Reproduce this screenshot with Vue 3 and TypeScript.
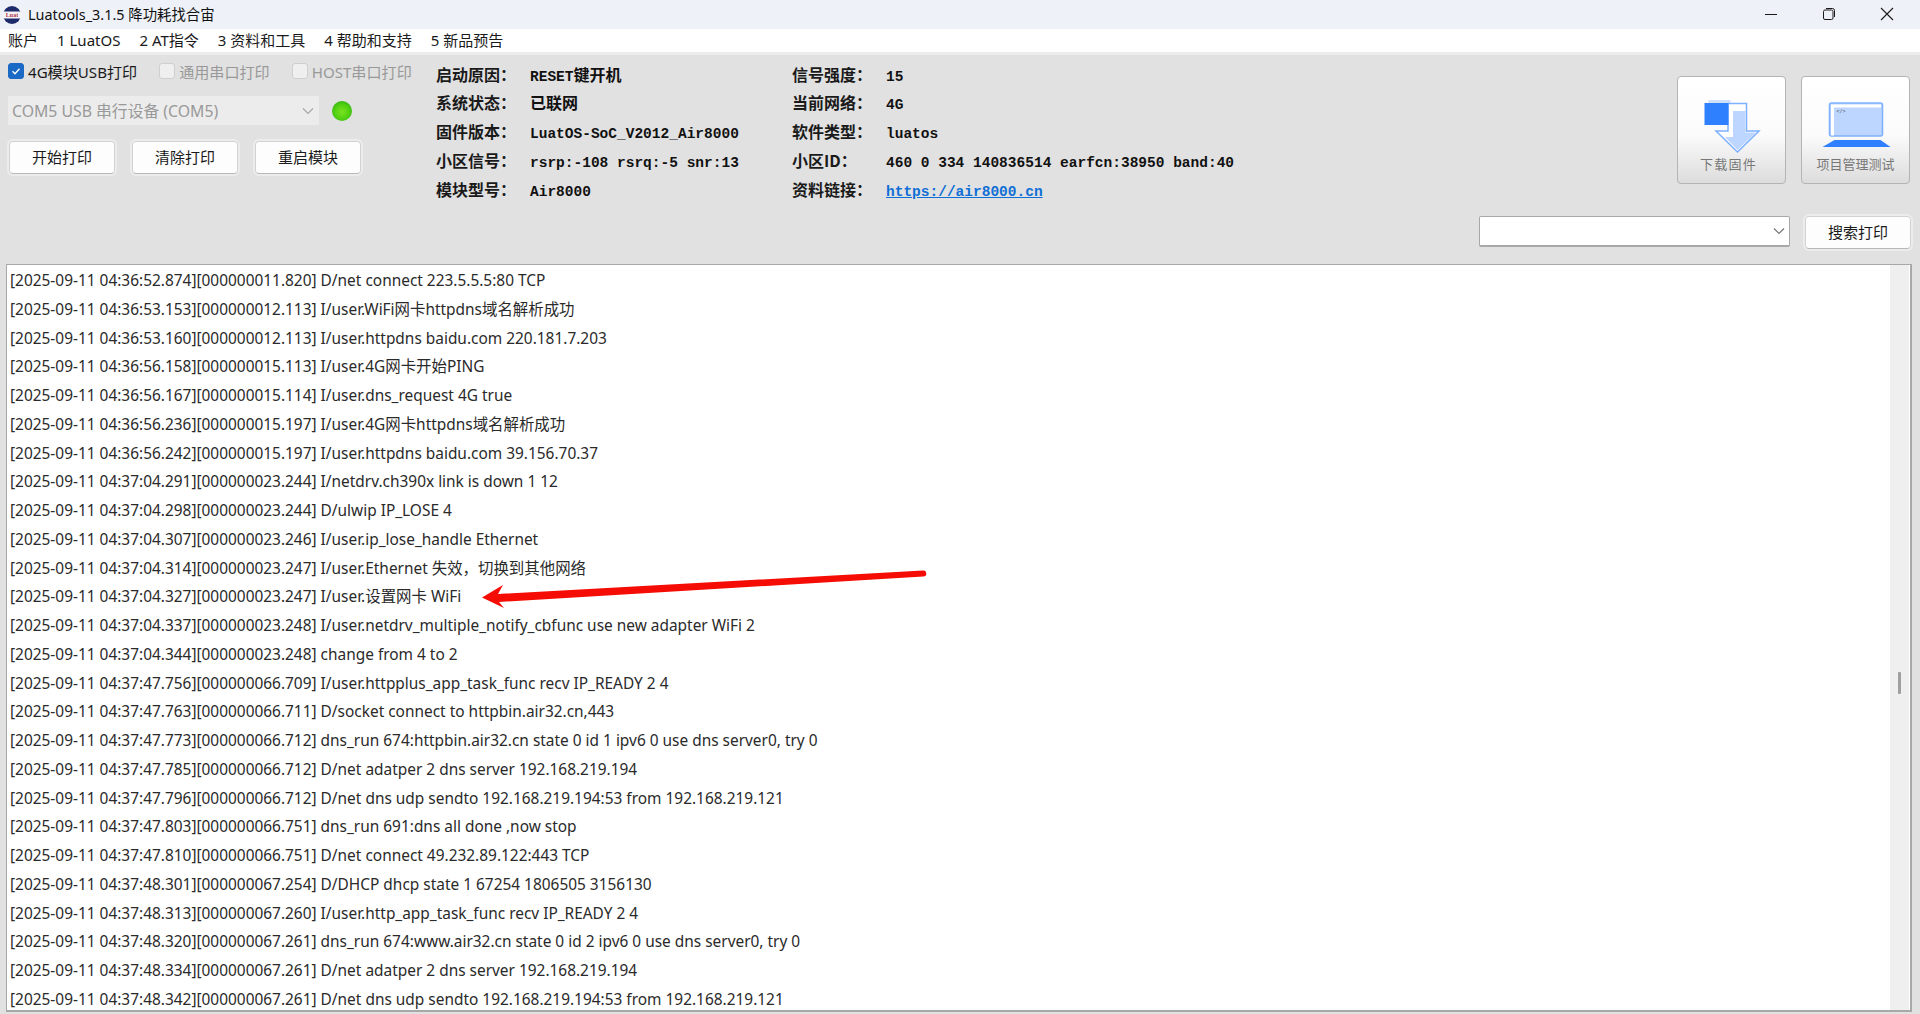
<script setup lang="ts">
const colon = '\uFF1A'
const comma = '\uFF0C'
const linkLabel = '资料链接' + colon
const menus: string[] = ['账户', '1 LuatOS', '2 AT指令', '3 资料和工具', '4 帮助和支持', '5 新品预告']
const left: [string, string, string][] = [
  ['启动原因' + colon, 'RESET', '键开机'],
  ['系统状态' + colon, '', '已联网'],
  ['固件版本' + colon, 'LuatOS-SoC_V2012_Air8000', ''],
  ['小区信号' + colon, 'rsrp:-108 rsrq:-5 snr:13', ''],
  ['模块型号' + colon, 'Air8000', ''],
]
const right: [string, string][] = [
  ['信号强度' + colon, '15'],
  ['当前网络' + colon, '4G'],
  ['软件类型' + colon, 'luatos'],
  ['小区ID' + colon, '460 0 334 140836514 earfcn:38950 band:40'],
]
const logs: string[] = [
  '[2025-09-11 04:36:52.874][000000011.820] D/net connect 223.5.5.5:80 TCP',
  '[2025-09-11 04:36:53.153][000000012.113] I/user.WiFi网卡httpdns域名解析成功',
  '[2025-09-11 04:36:53.160][000000012.113] I/user.httpdns baidu.com 220.181.7.203',
  '[2025-09-11 04:36:56.158][000000015.113] I/user.4G网卡开始PING',
  '[2025-09-11 04:36:56.167][000000015.114] I/user.dns_request 4G true',
  '[2025-09-11 04:36:56.236][000000015.197] I/user.4G网卡httpdns域名解析成功',
  '[2025-09-11 04:36:56.242][000000015.197] I/user.httpdns baidu.com 39.156.70.37',
  '[2025-09-11 04:37:04.291][000000023.244] I/netdrv.ch390x link is down 1 12',
  '[2025-09-11 04:37:04.298][000000023.244] D/ulwip IP_LOSE 4',
  '[2025-09-11 04:37:04.307][000000023.246] I/user.ip_lose_handle Ethernet',
  '[2025-09-11 04:37:04.314][000000023.247] I/user.Ethernet 失效' + comma + '切换到其他网络',
  '[2025-09-11 04:37:04.327][000000023.247] I/user.设置网卡 WiFi',
  '[2025-09-11 04:37:04.337][000000023.248] I/user.netdrv_multiple_notify_cbfunc use new adapter WiFi 2',
  '[2025-09-11 04:37:04.344][000000023.248] change from 4 to 2',
  '[2025-09-11 04:37:47.756][000000066.709] I/user.httpplus_app_task_func recv IP_READY 2 4',
  '[2025-09-11 04:37:47.763][000000066.711] D/socket connect to httpbin.air32.cn,443',
  '[2025-09-11 04:37:47.773][000000066.712] dns_run 674:httpbin.air32.cn state 0 id 1 ipv6 0 use dns server0, try 0',
  '[2025-09-11 04:37:47.785][000000066.712] D/net adatper 2 dns server 192.168.219.194',
  '[2025-09-11 04:37:47.796][000000066.712] D/net dns udp sendto 192.168.219.194:53 from 192.168.219.121',
  '[2025-09-11 04:37:47.803][000000066.751] dns_run 691:dns all done ,now stop',
  '[2025-09-11 04:37:47.810][000000066.751] D/net connect 49.232.89.122:443 TCP',
  '[2025-09-11 04:37:48.301][000000067.254] D/DHCP dhcp state 1 67254 1806505 3156130',
  '[2025-09-11 04:37:48.313][000000067.260] I/user.http_app_task_func recv IP_READY 2 4',
  '[2025-09-11 04:37:48.320][000000067.261] dns_run 674:www.air32.cn state 0 id 2 ipv6 0 use dns server0, try 0',
  '[2025-09-11 04:37:48.334][000000067.261] D/net adatper 2 dns server 192.168.219.194',
  '[2025-09-11 04:37:48.342][000000067.261] D/net dns udp sendto 192.168.219.194:53 from 192.168.219.121',
]
</script>

<template>
  <div class="app">
    <header class="titlebar">
      <svg class="logo" width="20" height="20" viewBox="0 0 20 20">
        <circle cx="10" cy="10" r="9" fill="#1f2a6b" />
        <rect x="0.5" y="6.5" width="19" height="7" fill="#f4f4f8" />
        <text x="10" y="12.4" font-size="6" font-weight="700" text-anchor="middle" fill="#b0354a" font-family="Liberation Serif, serif">Luat</text>
      </svg>
      <span class="title">Luatools_3.1.5 降功耗找合宙</span>
      <div class="winbtns">
        <svg width="14" height="14" viewBox="0 0 14 14"><path d="M1 7.5h12" stroke="#1a1a1a" stroke-width="1" fill="none" /></svg>
        <svg width="14" height="14" viewBox="0 0 14 14"><rect x="1.5" y="3" width="9.500" height="9.500" rx="1.500" stroke="#1a1a1a" fill="none" /><path d="M4 1.500h6.500a2 2 0 0 1 2 2V10" stroke="#1a1a1a" fill="none" /></svg>
        <svg width="14" height="14" viewBox="0 0 14 14"><path d="M1 1l12 12M13 1L1 13" stroke="#1a1a1a" stroke-width="1.100" fill="none" /></svg>
      </div>
    </header>

    <nav class="menubar">
      <span v-for="m in menus" :key="m" class="menu">{{ m }}</span>
    </nav>

    <section class="top">
      <div class="controls">
        <div class="checks">
          <label class="check on">
            <span class="box">
              <svg width="12" height="12" viewBox="0 0 12 12"><path d="M2.500 6.300l2.500 2.500 4.500-5" stroke="#fff" stroke-width="1.300" fill="none" /></svg>
            </span>
            4G模块USB打印
          </label>
          <label class="check"><span class="box"></span>通用串口打印</label>
          <label class="check"><span class="box"></span>HOST串口打印</label>
        </div>
        <div class="portrow">
          <div class="combo">
            <span>COM5 USB 串行设备 (COM5)</span>
            <svg width="12" height="8" viewBox="0 0 12 8"><path d="M1 1.500l5 5 5-5" stroke="#a8a8a8" stroke-width="1.200" fill="none" /></svg>
          </div>
          <span class="led"></span>
        </div>
        <div class="btnrow">
          <button class="btn">开始打印</button>
          <button class="btn">清除打印</button>
          <button class="btn">重启模块</button>
        </div>
      </div>

      <div class="info first">
        <div v-for="r in left" :key="r[0]" class="inforow">
          <span class="lab">{{ r[0] }}</span><span class="val">{{ r[1] }}<span class="cjk">{{ r[2] }}</span></span>
        </div>
      </div>
      <div class="info">
        <div v-for="r in right" :key="r[0]" class="inforow">
          <span class="lab">{{ r[0] }}</span><span class="val">{{ r[1] }}</span>
        </div>
        <div class="inforow">
          <span class="lab">{{ linkLabel }}</span><a class="val link">https://air8000.cn</a>
        </div>
      </div>

      <div class="bigbtns">
        <button class="big">
          <svg width="64" height="56" viewBox="0 0 64 56">
            <rect x="8.500" y="3" width="22" height="22" fill="#cfe0fb" />
            <path d="M28 6.500H46.500V34H59L37.500 55 16 34H28z" fill="#fff" stroke="#7db1ff" stroke-width="1.500" />
            <path d="M33 14H45.500V35.500H56L37.500 53 25 40H33z" fill="#bcd6ff" />
            <rect x="4.500" y="6" width="24" height="22" fill="#2f80ff" />
          </svg>
          <span class="biglabel wide">下载固件</span>
        </button>
        <button class="big">
          <svg width="72" height="56" viewBox="0 0 72 56">
            <rect x="9.500" y="6" width="53" height="33" rx="2" fill="#bcd6ff" stroke="#7db1ff" stroke-width="1.500" />
            <path d="M11 7.500h50v3H14v28h-3z" fill="#fff" />
            <text x="16.500" y="16" font-size="5" fill="#444" font-family="Liberation Mono, monospace">&lt;/&gt;</text>
            <path d="M14.500 43h46l10 7H2.500z" fill="#2f80ff" />
          </svg>
          <span class="biglabel">项目管理测试</span>
        </button>
      </div>
    </section>

    <section class="searchrow">
      <div class="searchbox">
        <svg width="12" height="8" viewBox="0 0 12 8"><path d="M1 1.500l5 5 5-5" stroke="#777" stroke-width="1.200" fill="none" /></svg>
      </div>
      <button class="btn search">搜索打印</button>
    </section>

    <main class="logpanel">
      <div class="lines">
        <div v-for="l in logs" :key="l" class="line">{{ l }}</div>
      </div>
      <div class="gutter"><span class="thumb"></span></div>
      <svg class="arrow" width="460" height="50" viewBox="0 0 460 50">
        <path d="M1 29.500 L22 17 L17 26 L442 2.500 a3 3 0 0 1 .5 6 L18 34 L23 40 Z" fill="#f50d05" />
      </svg>
    </main>
  </div>
</template>

<style>
html, body { margin: 0; padding: 0; overflow: hidden; }
</style>

<style scoped>
.app {
  width: 1920px;
  height: 1014px;
  display: flex;
  flex-direction: column;
  background: #e1e1e1;
  color: #1a1a1a;
  font-family: "Noto Sans", "Noto Sans CJK SC", sans-serif;
  font-size: 15px;
  overflow: hidden;
}
.titlebar {
  height: 29px;
  flex: none;
  display: flex;
  align-items: center;
  padding-left: 2px;
  background: #eef2f8;
}
.logo { flex: none; }
.title { margin: 0 0 2px 6px; font-size: 14.400px; color: #111; }
.winbtns {
  margin-left: auto;
  display: flex;
  gap: 44px;
  padding: 0 26px 2px 0;
  align-items: center;
}
.menubar {
  height: 21px;
  flex: none;
  display: flex;
  align-items: center;
  padding: 0 0 2px 8px;
  gap: 19px;
  background: #fff;
  border-bottom: 3px solid #ececec;
}
.menu { font-size: 15px; }
.top {
  height: 147px;
  flex: none;
  display: flex;
}
.controls {
  width: 436px;
  flex: none;
  padding: 7px 0 0 8px;
  box-sizing: border-box;
}
.checks {
  display: flex;
  height: 18px;
  align-items: center;
  gap: 22px;
  font-size: 15.100px;
}
.check {
  display: flex;
  align-items: center;
  gap: 4px;
  color: #999;
  white-space: nowrap;
}
.check.on { color: #1a1a1a; }
.box {
  width: 14px;
  height: 14px;
  border: 1px solid #cfcfcf;
  border-radius: 3px;
  background: #efefef;
  display: flex;
  align-items: center;
  justify-content: center;
}
.check.on .box { background: #1a69c4; border-color: #1a69c4; }
.portrow {
  display: flex;
  align-items: center;
  gap: 13px;
  margin-top: 16px;
}
.combo {
  width: 311px;
  height: 29px;
  box-sizing: border-box;
  background: #ececec;
  padding: 0 5px 0 4px;
  display: flex;
  align-items: center;
  justify-content: space-between;
  color: #999;
  font-size: 15.800px;
}
.led {
  width: 20px;
  height: 20px;
  border-radius: 50%;
  background: radial-gradient(circle at 50% 55%, #7be21f 0%, #4fd010 50%, #1b9d17 100%);
}
.btnrow {
  display: flex;
  gap: 17px;
  margin: 16px 0 0 1px;
}
.btn {
  width: 106px;
  height: 33px;
  background: #fdfdfd;
  border: 1px solid #d2d2d2;
  border-bottom-color: #b8b8b8;
  border-radius: 4px;
  font: inherit;
  color: #1a1a1a;
  padding: 0 0 2px;
  outline: 2px solid #ececec;
  outline-offset: 0;
}
.info {
  flex: none;
  display: flex;
  flex-direction: column;
  width: 356px;
  padding-top: 4.500px;
}
.inforow {
  height: 28.800px;
  line-height: 28.800px;
  display: flex;
  align-items: baseline;
  font-weight: 700;
  white-space: nowrap;
}
.lab {
  width: 94px;
  flex: none;
  font-size: 16px;
  color: #1a1a1a;
  font-family: "Noto Sans CJK SC", sans-serif;
}
.val {
  font-family: "Liberation Mono", "Noto Sans CJK SC", monospace;
  font-size: 14.500px;
  color: #111;
}
.cjk { font-size: 16px; font-family: "Noto Sans CJK SC", sans-serif; }
.link { color: #0f6fd6; text-decoration: underline; }
.bigbtns {
  margin-left: auto;
  display: flex;
  gap: 15px;
  padding: 21px 10px 0 0;
}
.big {
  width: 109px;
  height: 108px;
  box-sizing: border-box;
  border: 1px solid #b4b4b4;
  border-radius: 4px;
  background: linear-gradient(180deg, #fff 0%, #fbfbfb 55%, #dcdcdc 100%);
  padding: 20px 0 0;
  display: flex;
  flex-direction: column;
  align-items: center;
  font: inherit;
}
.biglabel {
  margin-top: 3px;
  font-size: 13px;
  line-height: 16px;
  color: #777;
}
.biglabel.wide { letter-spacing: 1.200px; margin-right: 6px; }
.searchrow {
  height: 62px;
  flex: none;
  display: flex;
  justify-content: flex-end;
  padding: 14px 9px 0 0;
  box-sizing: border-box;
  gap: 15px;
}
.searchbox {
  width: 311px;
  height: 31px;
  box-sizing: border-box;
  background: #fff;
  border: 1px solid #a8a8a8;
  border-bottom-width: 2px;
  border-radius: 2px;
  display: flex;
  align-items: center;
  justify-content: flex-end;
  padding-right: 4px;
}
.search { height: 33px; }
.logpanel {
  position: relative;
  flex: 1;
  margin: 0 8px 2px 6px;
  background: #fff;
  border: 1px solid #a8a8a8;
  border-right-width: 2px;
  border-bottom-width: 2px;
  display: flex;
  overflow: hidden;
  min-height: 0;
}
.lines {
  flex: 1;
  min-width: 0;
  padding: 5px 0 0 3px;
  overflow: hidden;
}
.line {
  height: 21px;
  line-height: 21px;
  margin-bottom: 7.760px;
  font-size: 15.430px;
  color: #2a2a2a;
  white-space: nowrap;
}
.gutter {
  width: 19px;
  flex: none;
  margin-right: 1px;
  background: #efefef;
  position: relative;
}
.thumb {
  position: absolute;
  left: 8px;
  top: 407px;
  width: 3px;
  height: 22px;
  background: #9f9f9f;
  border-radius: 1px;
}
.arrow {
  position: absolute;
  left: 474px;
  top: 303px;
}
</style>
